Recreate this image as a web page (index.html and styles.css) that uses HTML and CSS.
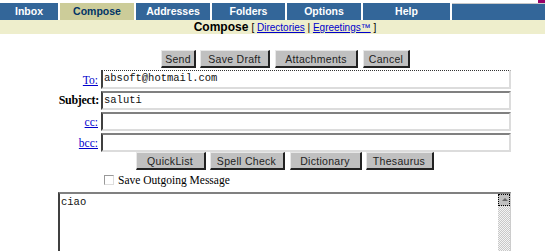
FILE: index.html
```html
<!DOCTYPE html>
<html lang="en">
<head>
  <meta charset="UTF-8" />
  <title>Compose - Mail</title>
  <link rel="stylesheet" href="styles.css">
</head>
<body>

  <div class="tabs">
    <div class="tab tab-inbox">Inbox</div>
    <div class="tab tab-compose active">Compose</div>
    <div class="tab tab-addresses">Addresses</div>
    <div class="tab tab-folders">Folders</div>
    <div class="tab tab-options">Options</div>
    <div class="tab tab-help">Help</div>
    <div class="tab tab-blank"><span class="corner"></span></div>
  </div>

  <div class="subbar">
    <b>Compose</b>
    <span class="sublinks">[ <a href="#">Directories</a> | <a href="#">Egreetings&trade;</a> ]</span>
  </div>

  <div class="compose">
    <div class="btn-row top-row">
      <button class="btn btn-send">Send</button>
      <button class="btn btn-draft">Save Draft</button>
      <button class="btn btn-attach">Attachments</button>
      <button class="btn btn-cancel">Cancel</button>
    </div>

    <div class="fields">
      <a href="#" class="label">To:</a>
      <div class="field focused">absoft@hotmail.com</div>
      <span class="label subject">Subject:</span>
      <div class="field">saluti</div>
      <a href="#" class="label">cc:</a>
      <div class="field"></div>
      <a href="#" class="label">bcc:</a>
      <div class="field"></div>
    </div>

    <div class="btn-row tools-row">
      <button class="btn btn-quick">QuickList</button>
      <button class="btn btn-spell">Spell Check</button>
      <button class="btn btn-dict">Dictionary</button>
      <button class="btn btn-thes">Thesaurus</button>
    </div>

    <label class="save-line"><span class="checkbox"></span>Save Outgoing Message</label>

    <div class="body-box">
      <div class="body-text">ciao</div>
      <div class="scrollbar"><div class="scroll-up"></div><div class="scroll-track"></div></div>
    </div>
  </div>

</body>
</html>
```

FILE: styles.css
```css
body {
  margin: 0;
  padding-top: 3px;
  background: #fff;
  font-family: "Liberation Sans", Arial, sans-serif;
  font-size: 11px;
  overflow: hidden;
}

.tabs {
  display: flex;
  height: 17px;
  background: #336699;
}

.tab {
  color: #fff;
  font-weight: bold;
  font-size: 10.5px;
  line-height: 17px;
  text-align: center;
  border-right: 2px solid #fff;
}

.tab-inbox { width: 58px; }
.tab-compose { width: 74px; }
.tab-addresses { width: 74px; }
.tab-folders { width: 73px; }
.tab-options { width: 74px; }
.tab-help { width: 87px; }

.tab-blank {
  flex: 1;
  border-right: 0;
  border-top: 1px solid #c8c8c8;
  position: relative;
}

.tab.active {
  background: #cccc99;
  color: #003366;
}

.corner {
  position: absolute;
  right: 0;
  top: -4px;
  width: 7px;
  height: 3px;
  background: #990066;
}

.subbar {
  background: #eeeecc;
  height: 14px;
  line-height: 14px;
  text-align: center;
  padding-left: 25px;
}

.subbar b {
  font-size: 12px;
}

.sublinks {
  font-size: 10px;
}

.sublinks a {
  color: #0000cc;
}

.compose {
  margin-left: 58px;
  width: 453px;
}

.btn-row {
  display: flex;
  justify-content: center;
  gap: 4px;
}

.top-row {
  margin-top: 16px;
  margin-bottom: 2px;
  padding-left: 2px;
}

.btn {
  height: 18px;
  padding: 0;
  background: #c0c0c0;
  color: #222;
  font-family: "Liberation Sans", Arial, sans-serif;
  font-size: 10.5px;
  letter-spacing: 0.3px;
  border-top: 1px solid #e8e8e8;
  border-left: 1px solid #e8e8e8;
  border-right: 2px solid #222;
  border-bottom: 2px solid #222;
  border-radius: 0;
}

.btn-send { width: 35px; }
.btn-draft { width: 70px; }
.btn-attach { width: 83px; margin-left: 1px; }
.btn-cancel { width: 47px; margin-left: 1px; }
.btn-quick { width: 70px; }
.btn-spell { width: 75px; }
.btn-dict { width: 72px; margin-left: 1px; }
.btn-thes { width: 68px; }

.fields {
  display: grid;
  grid-template-columns: 43px 410px;
  grid-template-rows: 19px 19px 19px 19px;
  row-gap: 2px;
  align-items: center;
}

.label {
  text-align: right;
  padding-right: 3px;
  font-family: "Liberation Serif", "Times New Roman", serif;
  font-size: 11.5px;
  color: #0000cc;
}

.label.subject {
  color: #000;
  font-weight: bold;
  font-size: 12px;
  padding-right: 2px;
  letter-spacing: -0.3px;
}

.field {
  height: 15px;
  line-height: 15px;
  border-top: 2px solid #808080;
  border-left: 2px solid #404040;
  border-right: 2px solid #dcdcdc;
  border-bottom: 2px solid #dcdcdc;
  padding-left: 1px;
  font-family: "Liberation Mono", "Courier New", monospace;
  font-size: 10.5px;
  color: #111;
}

.field.focused {
  border-top: 1px dotted #333;
  height: 16px;
}

.tools-row {
  margin-top: 0;
}

.save-line {
  display: flex;
  align-items: center;
  margin: 3px 0 0 46px;
  height: 13px;
  font-family: "Liberation Serif", "Times New Roman", serif;
  font-size: 11.5px;
}

.checkbox {
  width: 8px;
  height: 8px;
  border: 1px solid #999;
  border-right-color: #ddd;
  border-bottom-color: #ddd;
  margin-right: 4px;
}

.body-box {
  display: flex;
  margin-top: 6px;
  height: 60px;
  border-top: 2px solid #808080;
  border-left: 2px solid #404040;
  border-right: 1px solid #ccc;
}

.body-text {
  flex: 1;
  padding: 2px 1px;
  font-family: "Liberation Mono", "Courier New", monospace;
  font-size: 10.5px;
  color: #111;
}

.scrollbar {
  width: 12px;
  display: flex;
  flex-direction: column;
}

.scroll-up {
  height: 10px;
  background: #c0c0c0;
  border: 1px dotted #000;
  position: relative;
}

.scroll-up::after {
  content: "";
  position: absolute;
  left: 3px;
  top: 3px;
  border-left: 3px solid transparent;
  border-right: 3px solid transparent;
  border-bottom: 3px solid #666;
}

.scroll-track {
  flex: 1;
  background-color: #e8e8e8;
  background-image: repeating-conic-gradient(#c8c8c8 0 25%, #f4f4f4 0 50%);
  background-size: 2px 2px;
}
```
